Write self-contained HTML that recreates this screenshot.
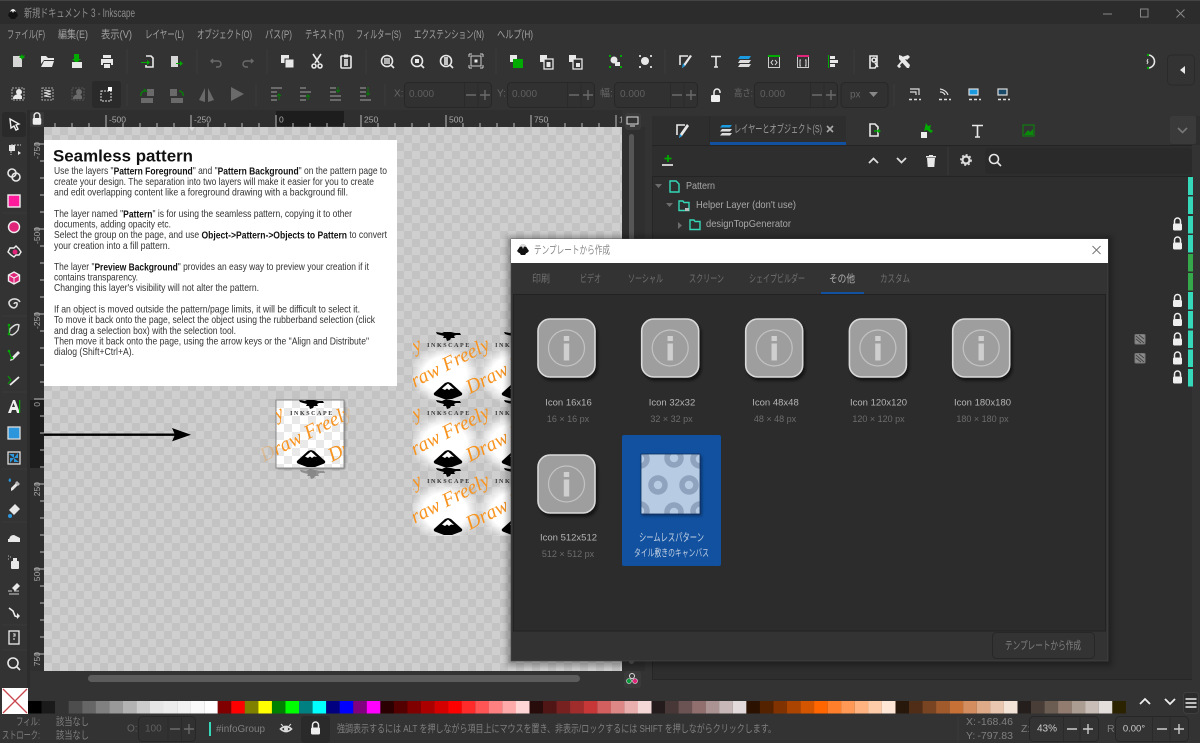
<!DOCTYPE html>
<html lang="ja"><head><meta charset="utf-8"><title>Inkscape</title>
<style>
html,body{margin:0;padding:0;background:#333;width:1200px;height:743px;overflow:hidden}
svg{display:block;filter:blur(.35px)}
text{font-family:"Liberation Sans","Noto Sans CJK JP",sans-serif;font-size:10px;fill:#a5a5a5;dominant-baseline:central}
.mn{fill:#a0a0a0;font-size:11px}
.doc{fill:#333;font-size:10.2px}
.b{font-weight:bold;fill:#111}
.tab{fill:#6f6f6f;font-size:10.5px}
.lb{fill:#b4b4b4;font-size:9.5px;text-anchor:middle}
.sb{fill:#6c6c6c;font-size:9px;text-anchor:middle}
.dim{fill:#666;font-size:10px}
.st{fill:#7f7f7f;font-size:10.5px}
.tr{fill:#a8a8a8;font-size:10.5px}
.sc{font-family:"Liberation Serif",serif;font-style:italic;font-size:20px;fill:#f7931e;dominant-baseline:auto}
.ink{font-family:"Liberation Serif",serif;font-size:6px;font-weight:bold;letter-spacing:1.6px;fill:#333;text-anchor:middle}
.i{fill:#e8e8e8}
.s{fill:none;stroke:#e8e8e8;stroke-width:1.6}
.d{fill:#6a6a6a}
.ds{fill:none;stroke:#6a6a6a;stroke-width:1.4}
.fld{fill:#313131;stroke:#272727}
</style></head><body>
<svg width="1200" height="743" viewBox="0 0 1200 743" xmlns="http://www.w3.org/2000/svg">
<defs>
<pattern id="chk" x="44" y="127" width="16" height="16" patternUnits="userSpaceOnUse"><rect width="16" height="16" fill="#cfcfcf"/><rect width="8" height="8" fill="#c3c3c3"/><rect x="8" y="8" width="8" height="8" fill="#c3c3c3"/></pattern>
<pattern id="chk2" x="276" y="400" width="16" height="16" patternUnits="userSpaceOnUse"><rect width="16" height="16" fill="#fff"/><rect width="8" height="8" fill="#e9e9e9"/><rect x="8" y="8" width="8" height="8" fill="#e9e9e9"/></pattern>
<radialGradient id="glow"><stop offset="0" stop-color="#fff"/><stop offset=".6" stop-color="#fff"/><stop offset="1" stop-color="#fff" stop-opacity="0"/></radialGradient>
<filter id="bl" x="-20%" y="-20%" width="140%" height="140%"><feGaussianBlur stdDeviation="3"/></filter>
<filter id="bl1" x="-20%" y="-20%" width="140%" height="140%"><feGaussianBlur stdDeviation="1.2"/></filter>
<clipPath id="cvs"><rect x="44" y="127" width="578" height="544"/></clipPath>
<clipPath id="pat"><rect x="413" y="332" width="137" height="204"/></clipPath>
<clipPath id="tile1"><rect x="276" y="400" width="68" height="68"/></clipPath>
<clipPath id="thumb"><rect x="641" y="454" width="59" height="60"/></clipPath>

<g id="lock"><path d="M-3-1v-2.5a3 3 0 0 1 6 0V-1" fill="none" stroke="#eee" stroke-width="1.5"/><rect x="-4.5" y="-1" width="9" height="7" rx="1.2" fill="#eee"/></g>
<g id="mount"><path d="M0-10L3-9 14 1Q15 3 12 4L4 7H-4L-12 4Q-15 3-14 1L-3-9Z" fill="#000"/><path d="M0-8.500L6-3 3-3.500 1-2-1-3.500-3-2-6-3.500Z" fill="#fff"/></g>
<g id="blot"><path d="M-12 0L-6 1-2-1 3 0 7 1 12 1 13 3 8 3 6 4 7 6 3 6 2 8-1 9-2 6-5 6-4 4-8 3-11 2Z" fill="#000"/></g>
<g id="info"><rect x="2" y="3" width="59" height="60" rx="13" fill="#000" opacity=".5" filter="url(#bl1)"/><rect x="1" y="1" width="57" height="58" rx="12" fill="#9e9e9e" stroke="#d9d9d9" stroke-width="1.6"/><circle cx="29.500" cy="30" r="18" fill="none" stroke="#c2c2c2" stroke-width="1.2"/><rect x="26.800" y="18" width="5.400" height="5" fill="#cfcfcf"/><rect x="26.800" y="25.500" width="5.400" height="17" fill="#cfcfcf"/></g>
<g id="text1"><text class="ink" x="1" y="14">INKSCAPE</text></g>
</defs>

<!-- base -->
<rect width="1200" height="743" fill="#333"/>
<rect width="1200" height="24" fill="#2c2c2c"/><rect width="1200" height="1" fill="#444"/>
<!-- titlebar -->
<g transform="translate(13,14)"><path d="M-5 1L-2-4Q0-6 2-4L5 1 4 3-4 3Z" fill="#111"/><path d="M-2-4Q0-6 2-4L3-2 1-3 0-1-1-3-3-2Z" fill="#eee"/><path d="M-4 2H4L2 5H-2Z" fill="#111"/></g>
<text x="24" y="14" style="font-size:11.500px;fill:#8d8d8d" textLength="111" lengthAdjust="spacingAndGlyphs">新規ドキュメント 3 - Inkscape</text>
<rect x="1103" y="13.500" width="9" height="1" fill="#888"/><rect x="1140.500" y="9" width="7.500" height="8" fill="none" stroke="#888"/><path d="M1176.500 9.500l8 8m0-8l-8 8" stroke="#888"/>
<!-- menu -->
<text class="mn" x="7" y="35" textLength="38" lengthAdjust="spacingAndGlyphs">ファイル(F)</text>
<text class="mn" x="58" y="35" textLength="30" lengthAdjust="spacingAndGlyphs">編集(E)</text>
<text class="mn" x="101" y="35" textLength="31" lengthAdjust="spacingAndGlyphs">表示(V)</text>
<text class="mn" x="145" y="35" textLength="39" lengthAdjust="spacingAndGlyphs">レイヤー(L)</text>
<text class="mn" x="197" y="35" textLength="55" lengthAdjust="spacingAndGlyphs">オブジェクト(O)</text>
<text class="mn" x="265" y="35" textLength="27" lengthAdjust="spacingAndGlyphs">パス(P)</text>
<text class="mn" x="305" y="35" textLength="39" lengthAdjust="spacingAndGlyphs">テキスト(T)</text>
<text class="mn" x="356" y="35" textLength="45" lengthAdjust="spacingAndGlyphs">フィルター(S)</text>
<text class="mn" x="414" y="35" textLength="70" lengthAdjust="spacingAndGlyphs">エクステンション(N)</text>
<text class="mn" x="497" y="35" textLength="36" lengthAdjust="spacingAndGlyphs">ヘルプ(H)</text>

<!-- toolbar row 1 -->
<path d="M127 49V74M197 49V74M267 49V74M366 49V74M496 49V74M665 49V74M854 49V74" stroke="#3b3b3b"/>
<g id="tb1">
<rect x="13" y="56" width="9" height="11" class="i" opacity=".9"/><path d="M22 54l-1 2-2-1 1 2-1 1 2 0 1 2 1-2 2 0-1-1 1-2-2 1z" fill="#0a0"/>
<path class="i" d="M41 56h5l2 2h6v2H44l-3 4zM44 61h10l-2 6H41z"/>
<path d="M74 54h5v5h2l-4.500 4-4.500-4h2z" fill="#0a0"/><rect x="72" y="62" width="10" height="6" class="i"/>
<path class="i" d="M103 55h8v3h-8zM101 59h12v6h-2v-2h-8v2h-2zM104 64h6v4h-6z"/>
<path class="s" d="M146 56h5l2 2v9h-7v-2"/><path d="M141 62h6v-2l3 2.500-3 2.500v-2h-6z" fill="#0a0"/>
<rect x="171" y="56" width="7" height="11" class="i" opacity=".9"/><path d="M176 63h4v-2l3 2.500-3 2.500v-2h-4z" fill="#0a0"/>
<path class="ds" d="M213 59l-2 2 2 2m-2-2h7a3 3 0 0 1 0 6h-2"/>
<path class="ds" d="M251 59l2 2-2 2m2-2h-7a3 3 0 0 0 0 6h2"/>
<rect x="281" y="55" width="8" height="8" class="i"/><rect x="285" y="59" width="9" height="9" class="i" stroke="#333"/>
<path class="s" d="M313 54l6 9M321 54l-6 9"/><circle cx="314" cy="66" r="2" class="s"/><circle cx="320" cy="66" r="2" class="s"/>
<rect x="341" y="56" width="10" height="12" rx="1" class="s"/><rect x="344" y="54.500" width="4" height="3" class="i"/><rect x="344" y="59" width="4" height="7" class="i" opacity=".8"/>
<circle cx="387" cy="61" r="5.500" class="s" stroke-width="2"/><rect x="384" y="58" width="6" height="6" class="i" opacity=".7"/><path class="s" d="M391 65l3 3"/>
<circle cx="417" cy="61" r="5.500" class="s" stroke-width="2"/><rect x="415" y="59" width="4" height="4" class="i"/><path class="s" d="M421 65l3 3"/>
<circle cx="446" cy="61" r="5.500" class="s" stroke-width="2"/><rect x="444" y="57" width="4" height="8" class="i" opacity=".8"/><path class="s" d="M450 65l3 3"/>
<rect x="471" y="56" width="10" height="10" fill="none" stroke="#ccc"/><rect x="474.500" y="59.500" width="3" height="3" class="i"/><path d="M469 54h3M469 54v3M483 54h-3M483 54v3M469 68h3M469 68v-3M483 68h-3M483 68v-3" stroke="#ccc"/>
<rect x="510" y="55" width="7" height="7" class="i"/><rect x="513" y="59" width="10" height="9" fill="#0a0"/>
<rect x="540" y="55" width="7" height="7" class="i"/><rect x="544" y="59" width="9" height="10" fill="#333" stroke="#e8e8e8" stroke-width="1.300"/><rect x="546.500" y="62" width="4" height="5" class="i"/>
<rect x="569" y="55" width="7" height="7" class="i"/><rect x="573" y="59" width="9" height="10" fill="#333" stroke="#e8e8e8" stroke-width="1.300"/><rect x="576" y="63" width="4" height="4" class="i"/>
<circle cx="614" cy="60" r="3.500" class="i"/><rect x="615" y="62" width="5" height="4" class="i"/><path d="M609 55h2v2h-2zM620 55h2v2h-2zM609 66h2v2h-2zM620 66h2v2h-2z" fill="#0a0"/>
<circle cx="645" cy="61" r="4" class="i"/><path d="M639 55h2v2h-2zM650 55h2v2h-2zM639 66h2v2h-2zM650 66h2v2h-2z" fill="#ccc"/>
<path class="s" d="M688 56h-8v9" stroke-width="1.200"/><path d="M690 55l-7 10-1 3 3-2 7-10z" class="i"/><path d="M683 63l-1 5 3-2z" fill="#1b9ae0"/>
<path d="M711 56.500h10M716 56.500V67M714 67h4" fill="none" stroke="#e8e8e8" stroke-width="1.600"/>
<path d="M740 56h11l-2 3h-11z" fill="#1b9ae0"/><path d="M740 60h11l-2 3h-11zM740 64h11l-2 3h-11z" fill="#ddd"/>
<rect x="768.500" y="55.500" width="11" height="12" fill="none" stroke="#ccc"/><rect x="768" y="55" width="12" height="2" fill="#0a0"/><path d="M773 60l-2 2.500 2 2.500M775 60l2 2.500-2 2.500" fill="none" stroke="#ddd"/>
<rect x="797.500" y="55.500" width="11" height="12" fill="none" stroke="#ccc"/><rect x="797" y="55" width="12" height="2" fill="#e0247a"/><path d="M801 60h-1v6h1M805 60h1v6h-1" fill="none" stroke="#ddd"/>
<rect x="828" y="55" width="1" height="13" fill="#0a0"/><path class="i" d="M830 56h5v3h-5zM830 60h8v3h-8zM830 64h5v3h-5z"/>
<path class="s" d="M870 56h7v9l-2 3h-5z"/><circle cx="874" cy="60" r="2" class="s"/><path class="s" d="M875 63l3 4"/>
<path class="i" d="M899 55l3 1 8 9-1 3-2 0-8-9zM908 55l2 2-3 3-1-1-6 6 1 2-2 1-2-2 6-7-1-2z"/>
<path class="s" d="M1148 55a6.500 6.500 0 1 1 0 13"/><circle cx="1148" cy="55" r="1.200" fill="#0a0"/><circle cx="1148" cy="68" r="1.200" fill="#0a0"/><path d="M1148 59l-1 2 1 1-1 2" stroke="#ddd" fill="none"/>
<rect x="1167.500" y="55" width="27" height="30" rx="4" fill="none" stroke="#2a2a2a"/><path d="M1185 66v8l-5-4z" class="i"/>
</g>
<!-- toolbar row 2 -->
<rect x="92" y="81" width="29" height="27" rx="3" fill="#2a2a2a"/>
<path d="M127 84V106M256 84V106M385 84V106M894 84V106" stroke="#3b3b3b"/>
<g>
<rect x="12" y="88" width="12" height="12" fill="none" stroke="#aaa" stroke-dasharray="2 1"/><circle cx="19" cy="92" r="3" class="i"/><path class="i" d="M13 99a5 4 0 0 1 9-3v3z"/>
<rect x="42" y="88" width="11" height="12" fill="none" stroke="#aaa" stroke-dasharray="2 1"/><path d="M44 90l7 1-7 2 7 1-7 2 7 1" fill="none" stroke="#ddd"/>
<rect x="72" y="88" width="12" height="12" fill="none" stroke="#555" stroke-dasharray="2 1"/><circle cx="79" cy="92" r="3" class="d"/><path class="d" d="M73 99a5 4 0 0 1 9-3v3z"/>
<rect x="101" y="91" width="10" height="10" fill="none" stroke="#ddd" stroke-dasharray="2 1"/><rect x="108" y="87" width="4" height="4" fill="#fff"/>
<rect x="141" y="98" width="12" height="5" class="d"/><rect x="147" y="89" width="7" height="7" class="d"/><path d="M141 96a4 4 0 0 1 4-5h1l-2-2" fill="none" stroke="#0a7a0a" stroke-width="1.500"/>
<rect x="171" y="98" width="12" height="5" class="d"/><rect x="170" y="89" width="7" height="7" class="d"/><path d="M183 96a4 4 0 0 0-4-5" fill="none" stroke="#0a7a0a" stroke-width="1.500"/>
<path class="d" d="M205 88v14l-6-2zM208 88v14l6-2z"/>
<path class="d" d="M231 87l13 7-13 7z"/>
<path class="d" d="M271 87h11v2h-11zM271 91h6v2h-6zM271 95h6v2h-6zM271 99h6v2h-6z"/><path d="M279 100v-6l2 2m-2-2l-2 2" stroke="#0a7a0a" fill="none"/>
<path class="d" d="M300 87h6v2h-6zM300 91h11v2h-11zM300 95h6v2h-6zM300 99h6v2h-6z"/><path d="M308 100v-5l2 2m-2-2l-2 2" stroke="#0a7a0a" fill="none"/>
<path class="d" d="M330 87h6v2h-6zM330 91h6v2h-6zM330 95h11v2h-11zM330 99h11v2h-11z"/><path d="M338 87v5l2-2m-2 2l-2-2" stroke="#0a7a0a" fill="none"/>
<path class="d" d="M360 87h6v2h-6zM360 91h6v2h-6zM360 95h6v2h-6zM360 99h11v2h-11z"/><path d="M368 87v8l2-2m-2 2l-2-2" stroke="#0a7a0a" fill="none"/>
</g>
<text class="dim" x="394" y="94">X:</text>
<rect class="fld" x="404.500" y="82.500" width="87" height="25" rx="4"/><path d="M464.500 83V107M478 83V107" stroke="#2a2a2a"/><text class="dim" x="409" y="94.500" style="fill:#5f5f5f">0.000</text><path class="ds" d="M466 95h10M480 95h10M485 90v10"/>
<text class="dim" x="497" y="94">Y:</text>
<rect class="fld" x="507.500" y="82.500" width="87" height="25" rx="4"/><path d="M567.500 83V107M581 83V107" stroke="#2a2a2a"/><text class="dim" x="512" y="94.500" style="fill:#5f5f5f">0.000</text><path class="ds" d="M569 95h10M583 95h10M588 90v10"/>
<text class="dim" x="600" y="94">幅:</text>
<rect class="fld" x="614.500" y="82.500" width="83" height="25" rx="4"/><path d="M670.500 83V107M684 83V107" stroke="#2a2a2a"/><text class="dim" x="620" y="94.500" style="fill:#5f5f5f">0.000</text><path class="ds" d="M672 95h10M686 95h10M691 90v10"/>
<g transform="translate(716,96)"><path d="M-2-1v-3a3 3 0 0 1 6 0v1" fill="none" stroke="#eee" stroke-width="1.500"/><rect x="-5" y="-1" width="9" height="7" rx="1" fill="#eee"/></g>
<text class="dim" x="734" y="94" textLength="19" lengthAdjust="spacingAndGlyphs">高さ:</text>
<rect class="fld" x="754.500" y="82.500" width="83" height="25" rx="4"/><path d="M810.500 83V107M824 83V107" stroke="#2a2a2a"/><text class="dim" x="760" y="94.500" style="fill:#5f5f5f">0.000</text><path class="ds" d="M812 95h10M826 95h10M831 90v10"/>
<rect class="fld" x="841" y="82.500" width="47" height="25" rx="4"/><text class="dim" x="850" y="95">px</text><path d="M869 92h9l-4.500 5z" fill="#888"/>
<g fill="none" stroke="#ddd" stroke-width="1.200">
<path d="M910 89h9v6M910 92h6v3"/><path d="M909 99.500h3M914 99.500h3M919 99.500h2" stroke-width="1.600"/>
<path d="M940 89a10 8 0 0 1 8 6M940 92a5 5 0 0 1 5 3"/><path d="M939 99.500h3M944 99.500h3M949 99.500h2" stroke-width="1.600"/>
<rect x="969" y="89" width="9" height="6" fill="#1b9ae0" stroke="#ddd"/><path d="M969 99.500h3M974 99.500h3M979 99.500h2" stroke-width="1.600"/>
<rect x="998" y="89" width="9" height="6" fill="#1a4a6a" stroke="#ddd"/><path d="M998 99.500h3M1003 99.500h3M1008 99.500h2" stroke-width="1.600"/>
</g>

<!-- left toolbar -->
<rect x="0" y="110" width="27" height="606" fill="#333"/>
<rect x="27" y="110" width="3" height="606" fill="#2c2c2c"/>
<rect x="2" y="112" width="24" height="25" rx="3" fill="#2a2a2a"/>
<g>
<path d="M10 119l9 5-3 1 2 4-2 1-2-4-3 2z" fill="#222" stroke="#eee" stroke-width="1.400"/>
<rect x="9" y="145" width="6" height="6" class="i"/><path d="M11 145h10M11 145v10" stroke="#ccc" stroke-dasharray="2 1"/><path d="M18 151l3 2-3 2z" class="i"/>
<circle cx="12" cy="173" r="4" class="s"/><circle cx="16" cy="177" r="4" class="s"/>
<rect x="8" y="195" width="12" height="12" fill="#ff1a9c" stroke="#eee" stroke-width="1.400"/>
<circle cx="14" cy="227" r="5.500" fill="#e0247a" stroke="#eee" stroke-width="1.400"/>
<path d="M8 252l2-4 4 0 2-2 3 3 2 3-2 3-3 0-2 2-3-2z" fill="none" stroke="#eee" stroke-width="1.400"/><circle cx="15" cy="252" r="2.500" fill="#e0247a"/>
<path d="M14 272l5.500 3v6l-5.500 3-5.500-3v-6z" fill="#e0247a" stroke="#eee" stroke-width="1.400"/><path d="M8.500 275l5.500 3 5.500-3M14 278v6" stroke="#eee" fill="none"/>
<path d="M14 304a2 2 0 0 1 3-1 4 4 0 0 1-3 5 5.500 5.500 0 0 1-5-6 6.500 6.500 0 0 1 11 0" fill="none" stroke="#ddd" stroke-width="1.600"/>
<path d="M10 329q6-6 9-4l-1 5q-3 4-6 5l-3-1z" fill="none" stroke="#ddd" stroke-width="1.400"/><circle cx="9" cy="325" r="1.300" fill="#0a0"/><circle cx="9" cy="334" r="1.300" fill="#0a0"/><path d="M9 325v9" stroke="#0a0"/>
<path d="M11 358l7-7 2 2-7 7-3 1z" class="i"/><circle cx="9" cy="351" r="1.300" fill="#0a0"/><circle cx="12" cy="358" r="1.300" fill="#0a0"/><path d="M9 351l2 6" stroke="#0a0"/>
<path d="M10 385l9-8" stroke="#eee" stroke-width="1.800"/><path d="M8 376l3 4-3 4" stroke="#0a0" fill="none"/>
<path d="M8 413l5-13h2l5 13h-3l-1-3h-4l-1 3zM12 407h3l-1.500-4z" fill="#eee" fill-rule="evenodd"/><rect x="19" y="400" width="1.200" height="13" fill="#0a0"/>
<rect x="8" y="427" width="12" height="12" stroke="#ddd" stroke-width="1.300" fill="#2b96dc"/>
<rect x="8" y="452" width="12" height="12" stroke="#ddd" stroke-width="1.300" fill="#333"/><path d="M14 458l-5-4 5 0zM14 458l4-5v5zM14 458l5 4h-5zM14 458l-4 5v-5z" fill="#2b96dc"/>
<path d="M11 488l6-6 2 2-6 6-2 1z" class="i"/><path d="M15 483l2-2 3 3-2 2z" fill="#bbb"/><path d="M10 478q-3 3 0 4 2-1 0-4z" fill="#2b96dc"/>
<path d="M9 510l6-6 5 5-6 6z" class="i"/><circle cx="10" cy="516" r="2" fill="#2b96dc"/>
<path d="M9 541q0-6 5-6l6 3v3z" class="i"/><rect x="8" y="539" width="12" height="3" class="i"/>
<rect x="11" y="561" width="8" height="8" rx="1" class="i"/><rect x="13" y="558" width="4" height="3" class="i"/><path d="M8 556h2M8 559h2M10 557h1" stroke="#bbb" stroke-dasharray="1 1"/>
<path d="M12 588l5-5 3 3-5 5z" class="i"/><path d="M8 591h4M14 591h5" stroke="#ccc"/><path d="M9 594h10" stroke="#ccc"/>
<path d="M9 608l4 3 2 5 3 1" fill="none" stroke="#eee" stroke-width="1.600"/><path d="M17 613l3 3-3 3z" class="i"/>
<rect x="9" y="631" width="10" height="13" fill="none" stroke="#eee" stroke-width="1.300"/><path d="M13 634l2 0 0 2-2 0M13 639h2" stroke="#eee"/>
<circle cx="13" cy="663" r="5" class="s"/><path class="s" d="M17 667l3 3"/>
</g>
<path d="M2 213H27M2 316H27M2 392H27M2 469H27M2 522H27M2 625H27M2 650H27" stroke="#3a3a3a"/>

<!-- canvas -->
<rect x="44" y="127" width="578" height="544" fill="url(#chk)"/>
<g clip-path="url(#cvs)">
<!-- infopanel -->
<rect x="44" y="140" width="353" height="246" fill="#fff"/>
<text x="53" y="156" style="font-size:17px;font-weight:bold;fill:#111" textLength="140" lengthAdjust="spacingAndGlyphs">Seamless pattern</text>
<text class="doc" x="54" y="171.700" textLength="333" lengthAdjust="spacingAndGlyphs">Use the layers "<tspan class="b">Pattern Foreground</tspan>" and "<tspan class="b">Pattern Background</tspan>" on the pattern page to</text>
<text class="doc" x="54" y="182.300" textLength="320" lengthAdjust="spacingAndGlyphs">create your design. The separation into two layers will make it easier for you to create</text>
<text class="doc" x="54" y="193" textLength="294" lengthAdjust="spacingAndGlyphs">and edit overlapping content like a foreground drawing with a background fill.</text>
<text class="doc" x="54" y="214.300" textLength="298" lengthAdjust="spacingAndGlyphs">The layer named "<tspan class="b">Pattern</tspan>" is for using the seamless pattern, copying it to other</text>
<text class="doc" x="54" y="225" textLength="117" lengthAdjust="spacingAndGlyphs">documents, adding opacity etc.</text>
<text class="doc" x="54" y="235.700" textLength="333" lengthAdjust="spacingAndGlyphs">Select the group on the page, and use <tspan class="b">Object-&gt;Pattern-&gt;Objects to Pattern</tspan> to convert</text>
<text class="doc" x="54" y="246.300" textLength="116" lengthAdjust="spacingAndGlyphs">your creation into a fill pattern.</text>
<text class="doc" x="54" y="267.700" textLength="315" lengthAdjust="spacingAndGlyphs">The layer "<tspan class="b">Preview Background</tspan>" provides an easy way to preview your creation if it</text>
<text class="doc" x="54" y="278" textLength="84" lengthAdjust="spacingAndGlyphs">contains transparency.</text>
<text class="doc" x="54" y="288.700" textLength="205" lengthAdjust="spacingAndGlyphs">Changing this layer's visibility will not alter the pattern.</text>
<text class="doc" x="54" y="310" textLength="306" lengthAdjust="spacingAndGlyphs">If an object is moved outside the pattern/page limits, it will be difficult to select it.</text>
<text class="doc" x="54" y="320.700" textLength="321" lengthAdjust="spacingAndGlyphs">To move it back onto the page, select the object using the rubberband selection (click</text>
<text class="doc" x="54" y="331.300" textLength="182" lengthAdjust="spacingAndGlyphs">and drag a selection box) with the selection tool.</text>
<text class="doc" x="54" y="342" textLength="315" lengthAdjust="spacingAndGlyphs">Then move it back onto the page, using the arrow keys or the "Align and Distribute"</text>
<text class="doc" x="54" y="352.700" textLength="80" lengthAdjust="spacingAndGlyphs">dialog (Shift+Ctrl+A).</text>
<!-- arrow -->
<path d="M44 434.700H178" stroke="#000" stroke-width="2.400"/><path d="M172 428l19 6.700-19 6.700 3-6.700z" fill="#000"/>
<!-- single tile -->
<rect x="277" y="401" width="68" height="68" fill="#000" opacity=".45" filter="url(#bl1)"/>
<g transform="translate(312,470)" opacity=".3"><use href="#blot"/></g>
<g style="opacity:.3"><text class="sc" transform="translate(264,462) rotate(-27)" textLength="100" lengthAdjust="spacingAndGlyphs">Draw Freely</text></g>
<rect x="276" y="400" width="68" height="68" fill="url(#chk2)" stroke="#8a8a8a"/>
<g clip-path="url(#tile1)">
<g transform="translate(311,400)"><use href="#blot"/><use href="#text1"/></g>
<use href="#mount" transform="translate(311,460)"/>
<text class="sc" transform="translate(196,462) rotate(-27)" textLength="100" lengthAdjust="spacingAndGlyphs">Draw Freely</text>
<text class="sc" transform="translate(264,462) rotate(-27)" textLength="100" lengthAdjust="spacingAndGlyphs">Draw Freely</text>
<text class="sc" transform="translate(332,462) rotate(-27)" textLength="100" lengthAdjust="spacingAndGlyphs">Draw Freely</text>
</g>
<!-- pattern repeat -->
<g clip-path="url(#pat)">
<ellipse cx="445" cy="375" rx="36" ry="30" fill="url(#glow)"/><ellipse cx="445" cy="443" rx="36" ry="30" fill="url(#glow)"/><ellipse cx="445" cy="511" rx="36" ry="30" fill="url(#glow)"/>
<ellipse cx="513" cy="375" rx="36" ry="30" fill="url(#glow)"/><ellipse cx="513" cy="443" rx="36" ry="30" fill="url(#glow)"/><ellipse cx="513" cy="511" rx="36" ry="30" fill="url(#glow)"/>
<g transform="translate(448,332)"><use href="#blot"/><use href="#text1"/></g>
<g transform="translate(448,400)"><use href="#blot"/><use href="#text1"/></g>
<g transform="translate(448,468)"><use href="#blot"/><use href="#text1"/></g>
<g transform="translate(516,332)"><use href="#blot"/><use href="#text1"/></g>
<g transform="translate(516,400)"><use href="#blot"/><use href="#text1"/></g>
<g transform="translate(516,468)"><use href="#blot"/><use href="#text1"/></g>
<use href="#mount" transform="translate(448,392)"/><use href="#mount" transform="translate(448,460)"/><use href="#mount" transform="translate(448,528)"/>
<use href="#mount" transform="translate(516,392)"/><use href="#mount" transform="translate(516,460)"/><use href="#mount" transform="translate(516,528)"/>
<text class="sc" transform="translate(334,394) rotate(-27)" textLength="100" lengthAdjust="spacingAndGlyphs">Draw Freely</text>
<text class="sc" transform="translate(402,394) rotate(-27)" textLength="100" lengthAdjust="spacingAndGlyphs">Draw Freely</text>
<text class="sc" transform="translate(470,394) rotate(-27)" textLength="100" lengthAdjust="spacingAndGlyphs">Draw Freely</text>
<text class="sc" transform="translate(334,462) rotate(-27)" textLength="100" lengthAdjust="spacingAndGlyphs">Draw Freely</text>
<text class="sc" transform="translate(402,462) rotate(-27)" textLength="100" lengthAdjust="spacingAndGlyphs">Draw Freely</text>
<text class="sc" transform="translate(470,462) rotate(-27)" textLength="100" lengthAdjust="spacingAndGlyphs">Draw Freely</text>
<text class="sc" transform="translate(334,530) rotate(-27)" textLength="100" lengthAdjust="spacingAndGlyphs">Draw Freely</text>
<text class="sc" transform="translate(402,530) rotate(-27)" textLength="100" lengthAdjust="spacingAndGlyphs">Draw Freely</text>
<text class="sc" transform="translate(470,530) rotate(-27)" textLength="100" lengthAdjust="spacingAndGlyphs">Draw Freely</text>
</g>
</g>

<!-- rulers -->
<rect x="30" y="110" width="592" height="17" fill="#2f2f2f"/>
<rect x="276" y="111" width="68" height="15" fill="#1d1d1d"/>
<rect x="30" y="127" width="14" height="544" fill="#2f2f2f"/>
<rect x="30" y="400" width="14" height="68" fill="#1d1d1d"/>
<rect x="30" y="112" width="14" height="15" rx="2" fill="#3a3a3a"/>
<g transform="translate(37,119) scale(.95)"><use href="#lock"/></g>
<g stroke="#bbb" fill="none">
<path d="M106 115V127M191 115V127M276 115V127M361 115V127M446 115V127M531 115V127M616 115V127"/>
<path d="M55 123V127M72 123V127M89 123V127M123 123V127M140 123V127M157 123V127M174 123V127M208 123V127M225 123V127M242 123V127M259 123V127M293 123V127M310 123V127M327 123V127M344 123V127M378 123V127M395 123V127M412 123V127M429 123V127M463 123V127M480 123V127M497 123V127M514 123V127M548 123V127M565 123V127M582 123V127M599 123V127"/>
<path d="M34 144H44M34 229H44M34 314H44M34 399H44M34 484H44M34 569H44M34 654H44"/>
<path d="M40 161H44M40 178H44M40 195H44M40 212H44M40 246H44M40 263H44M40 280H44M40 297H44M40 331H44M40 348H44M40 365H44M40 382H44M40 416H44M40 433H44M40 450H44M40 467H44M40 501H44M40 518H44M40 535H44M40 552H44M40 586H44M40 603H44M40 620H44M40 637H44"/>
</g>
<path d="M189 127l6 0-3 4z" fill="#ddd"/>
<g>
<text x="109" y="119.500" style="font-size:8.500px;fill:#aaa">-500</text><text x="194" y="119.500" style="font-size:8.500px;fill:#aaa">-250</text><text x="279" y="119.500" style="font-size:8.500px;fill:#aaa">0</text><text x="364" y="119.500" style="font-size:8.500px;fill:#aaa">250</text><text x="449" y="119.500" style="font-size:8.500px;fill:#aaa">500</text><text x="534" y="119.500" style="font-size:8.500px;fill:#aaa">750</text><text x="619" y="119.500" style="font-size:8.500px;fill:#aaa">1</text>
<text transform="translate(37,142) rotate(-90)" style="font-size:8.500px;fill:#aaa;text-anchor:end">-750</text>
<text transform="translate(37,227) rotate(-90)" style="font-size:8.500px;fill:#aaa;text-anchor:end">-500</text>
<text transform="translate(37,312) rotate(-90)" style="font-size:8.500px;fill:#aaa;text-anchor:end">-250</text>
<text transform="translate(37,402) rotate(-90)" style="font-size:8.500px;fill:#aaa;text-anchor:end">0</text>
<text transform="translate(37,482) rotate(-90)" style="font-size:8.500px;fill:#aaa;text-anchor:end">250</text>
<text transform="translate(37,567) rotate(-90)" style="font-size:8.500px;fill:#aaa;text-anchor:end">500</text>
<text transform="translate(37,652) rotate(-90)" style="font-size:8.500px;fill:#aaa;text-anchor:end">750</text>
</g>

<!-- canvas scrollbars -->
<rect x="622" y="110" width="28" height="570" fill="#333"/>
<rect x="622" y="127" width="23" height="544" fill="#2f2f2f"/>
<rect x="625" y="113" width="16" height="17" rx="3" fill="#3a3a3a"/>
<rect x="627" y="117" width="11" height="7" fill="#333" stroke="#ddd"/><path d="M630 126h5" stroke="#ddd"/>
<rect x="629" y="134" width="5" height="530" rx="2.500" fill="#565656"/>
<rect x="44" y="671" width="601" height="17" fill="#333"/>
<rect x="88" y="675" width="492" height="7" rx="3.500" fill="#5c5c5c"/>
<rect x="624" y="671" width="17" height="17" rx="3" fill="#3a3a3a"/>
<circle cx="632" cy="676" r="2.500" fill="none" stroke="#ddd"/><circle cx="629" cy="681" r="2.500" fill="#0a9a3a" stroke="#ddd" stroke-width=".6"/><circle cx="635" cy="681" r="2.500" fill="#e0247a" stroke="#ddd" stroke-width=".6"/>

<!-- right panel -->
<rect x="645" y="110" width="555" height="606" fill="#333"/>
<rect x="652" y="116" width="548" height="29" fill="#2e2e2e"/>
<rect x="652" y="146" width="540" height="30" fill="#2e2e2e"/>
<rect x="652" y="177" width="540" height="502" fill="#2e2e2e"/>
<path d="M652.500 177V679.500H1192" fill="none" stroke="#262626"/>
<path d="M652 145.500H1192M652 176.500H1192M710 116V142" stroke="#242424"/>
<rect x="710" y="116" width="136" height="29" fill="#2e2e2e"/>
<rect x="710" y="142" width="136" height="3" fill="#11519f"/>
<rect x="846" y="116" width="324" height="29" fill="#333"/>
<rect x="1170" y="116" width="26" height="28" fill="#3a3a3a" rx="2"/>
<path d="M1178 128l4.500 4.500 4.500-4.500" fill="none" stroke="#777" stroke-width="1.600"/>
<path class="s" d="M685 125h-8v10" stroke-width="1.300"/><path d="M687 124l-7 10-1 4 3-2 7-10z" class="i"/><path d="M680 134l-1 4 3-2z" fill="#1b9ae0"/>
<path d="M722 125h10l-2 2.500h-10z" fill="#1b9ae0"/><path d="M722 129h10l-2 2.500h-10zM722 133h10l-2 2.500h-10z" fill="#ddd"/>
<text x="734" y="129.500" style="fill:#999;font-size:11px" textLength="88" lengthAdjust="spacingAndGlyphs">レイヤーとオブジェクト(S)</text>
<path d="M827 126l6 6m0-6l-6 6" stroke="#aaa" stroke-width="1.600"/>
<path class="s" d="M870 124h5l3 3v9h-8z"/><path d="M874 131h5" stroke="#0a0" stroke-width="1.500"/><path d="M878 129l3 2-3 2z" fill="#0a0"/>
<rect x="921" y="132" width="6" height="6" fill="#eee"/><path d="M926 123l2 3 3-1-1 4 3 2-2 2-4-3-3 1z" fill="#0a0"/>
<path d="M972 125.500h11M977.500 125.500V137M975 137h5" fill="none" stroke="#e8e8e8" stroke-width="1.600"/>
<rect x="1023" y="125" width="11" height="11" fill="none" stroke="#0a8a0a"/><path d="M1024 135l4-5 2 2 3-3v6z" fill="#0a8a0a"/>
<path d="M662 165h11" stroke="#eee" stroke-width="1.600"/><path d="M668 155v7m-3.500-3.500h7" stroke="#0a0" stroke-width="1.800"/>
<path d="M869 163l4.500-4.500 4.500 4.500M897 158l4.500 4.500 4.500-4.500" fill="none" stroke="#ddd" stroke-width="1.800"/>
<path class="i" d="M926 156h10v1.500h-10zM929 155h4v1h-4zM927 158h8l-.7 9h-6.600z"/>
<circle cx="966" cy="160" r="3.500" fill="none" stroke="#ddd" stroke-width="2.200"/><circle cx="966" cy="160" r="5.200" fill="none" stroke="#ddd" stroke-width="1.400" stroke-dasharray="2 2"/>
<path d="M948 147V175" stroke="#3a3a3a"/>
<rect x="985" y="148" width="207" height="26" rx="3" fill="#2a2a2a"/>
<circle cx="994" cy="159" r="4.500" class="s"/><path class="s" d="M997.500 162.500l3.500 3.500"/>
<!-- tree -->
<path d="M655 184h7l-3.500 4zM666 203h7l-3.500 4z" fill="#6c6c6c"/><path d="M678 222v7l4-3.500z" fill="#6c6c6c"/>
<path d="M670 181h6l3 3v8h-9z" fill="none" stroke="#35d8b8" stroke-width="1.400"/>
<text class="tr" x="686" y="186" textLength="29" lengthAdjust="spacingAndGlyphs">Pattern</text>
<path d="M679 201h4l1 1.500h5v8h-10z" fill="none" stroke="#35d8b8" stroke-width="1.400"/><rect x="685" y="208" width="4" height="3" fill="#bbb"/>
<text class="tr" x="696" y="205" textLength="100" lengthAdjust="spacingAndGlyphs">Helper Layer (don't use)</text>
<path d="M690 220h4l1 1.500h5v8h-10z" fill="none" stroke="#35d8b8" stroke-width="1.400"/>
<text class="tr" x="706" y="224" textLength="85" lengthAdjust="spacingAndGlyphs">designTopGenerator</text>
<g fill="#35d8b8">
<rect x="1188" y="177" width="5" height="18"/><rect x="1188" y="196.500" width="5" height="17.500"/><rect x="1188" y="216" width="5" height="17.500"/><rect x="1188" y="235" width="5" height="17.500"/>
<rect x="1188" y="254" width="5" height="17.500" fill="#34a84a"/><rect x="1188" y="273" width="5" height="17.500" fill="#34a84a"/>
<rect x="1188" y="292" width="5" height="17.500"/><rect x="1188" y="311" width="5" height="17.500"/><rect x="1188" y="330.500" width="5" height="17.500"/><rect x="1188" y="349.500" width="5" height="17.500"/><rect x="1188" y="369" width="5" height="17.500"/>
</g>
<use href="#lock" transform="translate(1177.500,224.500)"/><use href="#lock" transform="translate(1177.500,243.500)"/><use href="#lock" transform="translate(1177.500,301)"/><use href="#lock" transform="translate(1177.500,320)"/><use href="#lock" transform="translate(1177.500,339.500)"/><use href="#lock" transform="translate(1177.500,358.500)"/><use href="#lock" transform="translate(1177.500,377.500)"/>
<rect x="1135" y="334.500" width="10" height="9.500" rx="1" fill="#8a8a8a" stroke="#777"/><path d="M1136 336l8 7M1136 339l5 4M1139 335l5 4" stroke="#444"/>
<rect x="1135" y="353.500" width="10" height="9.500" rx="1" fill="#8a8a8a" stroke="#777"/><path d="M1136 355l8 7M1136 358l5 4M1139 354l5 4" stroke="#444"/>

<!-- palette -->
<rect x="0" y="688" width="1200" height="28" fill="#333"/>
<rect x="2" y="688" width="26" height="26" fill="#fff"/><path d="M3 689l24 24m0-24l-24 24" stroke="#c8474f" stroke-width="1.300"/>
<g>
<rect x="28.000" y="701" width="13.600" height="12.500" fill="#000000"/><rect x="41.500" y="701" width="13.600" height="12.500" fill="#1a1a1a"/><rect x="55.100" y="701" width="13.600" height="12.500" fill="#333333"/><rect x="68.600" y="701" width="13.600" height="12.500" fill="#4d4d4d"/><rect x="82.200" y="701" width="13.600" height="12.500" fill="#666666"/><rect x="95.700" y="701" width="13.600" height="12.500" fill="#808080"/><rect x="109.300" y="701" width="13.600" height="12.500" fill="#999999"/><rect x="122.800" y="701" width="13.600" height="12.500" fill="#b3b3b3"/><rect x="136.400" y="701" width="13.600" height="12.500" fill="#cccccc"/><rect x="150.000" y="701" width="13.600" height="12.500" fill="#e6e6e6"/><rect x="163.500" y="701" width="13.600" height="12.500" fill="#ececec"/><rect x="177.100" y="701" width="13.600" height="12.500" fill="#f2f2f2"/><rect x="190.600" y="701" width="13.600" height="12.500" fill="#f9f9f9"/><rect x="204.200" y="701" width="13.600" height="12.500" fill="#ffffff"/>
<rect x="217.700" y="701" width="13.600" height="12.500" fill="#800000"/><rect x="231.300" y="701" width="13.600" height="12.500" fill="#ff0000"/><rect x="244.800" y="701" width="13.600" height="12.500" fill="#808000"/><rect x="258.400" y="701" width="13.600" height="12.500" fill="#ffff00"/><rect x="271.900" y="701" width="13.600" height="12.500" fill="#008000"/><rect x="285.500" y="701" width="13.600" height="12.500" fill="#00ff00"/><rect x="299.100" y="701" width="13.600" height="12.500" fill="#008080"/><rect x="312.600" y="701" width="13.600" height="12.500" fill="#00ffff"/><rect x="326.200" y="701" width="13.600" height="12.500" fill="#000080"/><rect x="339.700" y="701" width="13.600" height="12.500" fill="#0000ff"/><rect x="353.300" y="701" width="13.600" height="12.500" fill="#800080"/><rect x="366.800" y="701" width="13.600" height="12.500" fill="#ff00ff"/>
<rect x="380.400" y="701" width="13.600" height="12.500" fill="#2b0000"/><rect x="393.900" y="701" width="13.600" height="12.500" fill="#550000"/><rect x="407.500" y="701" width="13.600" height="12.500" fill="#800000"/><rect x="421.000" y="701" width="13.600" height="12.500" fill="#aa0000"/><rect x="434.600" y="701" width="13.600" height="12.500" fill="#d40000"/><rect x="448.200" y="701" width="13.600" height="12.500" fill="#ff0000"/><rect x="461.700" y="701" width="13.600" height="12.500" fill="#ff2a2a"/><rect x="475.300" y="701" width="13.600" height="12.500" fill="#ff5555"/><rect x="488.800" y="701" width="13.600" height="12.500" fill="#ff8080"/><rect x="502.400" y="701" width="13.600" height="12.500" fill="#ffaaaa"/><rect x="515.900" y="701" width="13.600" height="12.500" fill="#ffd5d5"/>
<rect x="529.500" y="701" width="13.600" height="12.500" fill="#280b0b"/><rect x="543.000" y="701" width="13.600" height="12.500" fill="#501616"/><rect x="556.600" y="701" width="13.600" height="12.500" fill="#782121"/><rect x="570.100" y="701" width="13.600" height="12.500" fill="#a02c2c"/><rect x="583.700" y="701" width="13.600" height="12.500" fill="#c83737"/><rect x="597.300" y="701" width="13.600" height="12.500" fill="#d35f5f"/><rect x="610.800" y="701" width="13.600" height="12.500" fill="#de8787"/><rect x="624.400" y="701" width="13.600" height="12.500" fill="#e9afaf"/><rect x="637.900" y="701" width="13.600" height="12.500" fill="#f4d7d7"/>
<rect x="651.500" y="701" width="13.600" height="12.500" fill="#241c1c"/><rect x="665.000" y="701" width="13.600" height="12.500" fill="#483737"/><rect x="678.600" y="701" width="13.600" height="12.500" fill="#6c5353"/><rect x="692.100" y="701" width="13.600" height="12.500" fill="#916f6f"/><rect x="705.700" y="701" width="13.600" height="12.500" fill="#ac9393"/><rect x="719.200" y="701" width="13.600" height="12.500" fill="#c8b7b7"/><rect x="732.800" y="701" width="13.600" height="12.500" fill="#e3dbdb"/>
<rect x="746.400" y="701" width="13.600" height="12.500" fill="#2b1100"/><rect x="759.900" y="701" width="13.600" height="12.500" fill="#552200"/><rect x="773.500" y="701" width="13.600" height="12.500" fill="#803300"/><rect x="787.000" y="701" width="13.600" height="12.500" fill="#aa4400"/><rect x="800.600" y="701" width="13.600" height="12.500" fill="#d45500"/><rect x="814.100" y="701" width="13.600" height="12.500" fill="#ff6600"/><rect x="827.700" y="701" width="13.600" height="12.500" fill="#ff7f2a"/><rect x="841.200" y="701" width="13.600" height="12.500" fill="#ff9955"/><rect x="854.800" y="701" width="13.600" height="12.500" fill="#ffb380"/><rect x="868.300" y="701" width="13.600" height="12.500" fill="#ffccaa"/><rect x="881.900" y="701" width="13.600" height="12.500" fill="#ffe6d5"/>
<rect x="895.500" y="701" width="13.600" height="12.500" fill="#28170b"/><rect x="909.000" y="701" width="13.600" height="12.500" fill="#502d16"/><rect x="922.600" y="701" width="13.600" height="12.500" fill="#784421"/><rect x="936.100" y="701" width="13.600" height="12.500" fill="#a05a2c"/><rect x="949.700" y="701" width="13.600" height="12.500" fill="#c87137"/><rect x="963.200" y="701" width="13.600" height="12.500" fill="#d38d5f"/><rect x="976.800" y="701" width="13.600" height="12.500" fill="#deaa87"/><rect x="990.300" y="701" width="13.600" height="12.500" fill="#e9c6af"/><rect x="1003.900" y="701" width="13.600" height="12.500" fill="#f4e3d7"/>
<rect x="1017.500" y="701" width="13.600" height="12.500" fill="#241f1c"/><rect x="1031.000" y="701" width="13.600" height="12.500" fill="#483e37"/><rect x="1044.600" y="701" width="13.600" height="12.500" fill="#6c5d53"/><rect x="1058.100" y="701" width="13.600" height="12.500" fill="#917c6f"/><rect x="1071.700" y="701" width="13.600" height="12.500" fill="#ac9d93"/><rect x="1085.200" y="701" width="13.600" height="12.500" fill="#c8beb7"/><rect x="1098.800" y="701" width="13.600" height="12.500" fill="#e3dedb"/><rect x="1112.300" y="701" width="13.600" height="12.500" fill="#2b2200"/>
</g>
<path d="M1140 704l5-5 5 5M1165 699l5 5 5-5" fill="none" stroke="#eee" stroke-width="1.800"/>
<rect x="1183.500" y="692.500" width="15" height="21" rx="3" fill="#2c2c2c" stroke="#3e3e3e"/>
<path d="M1185.500 699h11M1185.500 703h11M1185.500 707h11" stroke="#eee" stroke-width="1.500"/>

<!-- status -->
<rect x="0" y="714" width="1200" height="29" fill="#333"/>
<text class="st" x="16" y="722" textLength="24" lengthAdjust="spacingAndGlyphs">フィル:</text>
<text class="st" x="2" y="735.500" textLength="38" lengthAdjust="spacingAndGlyphs">ストローク:</text>
<text class="st" x="56" y="722" textLength="33" lengthAdjust="spacingAndGlyphs">該当なし</text>
<text class="st" x="56" y="735.500" textLength="33" lengthAdjust="spacingAndGlyphs">該当なし</text>
<text class="dim" x="127" y="729">O:</text>
<rect class="fld" x="138.500" y="716.500" width="57" height="25" rx="4"/><path d="M168 717V741M181.500 717V741" stroke="#2a2a2a"/><text class="dim" x="145" y="729" style="fill:#5f5f5f">100</text><path class="ds" d="M170 729h10M184 729h10M189 724v10"/>
<rect x="209" y="722" width="2" height="14" fill="#35d8b8"/>
<text class="st" x="216" y="729" textLength="49" lengthAdjust="spacingAndGlyphs">#infoGroup</text>
<path d="M280.500 729q5.500-5 11 0q-5.500 5-11 0z" fill="none" stroke="#ddd" stroke-width="1.600"/><circle cx="286" cy="729" r="2" fill="#ddd"/><path d="M281 724l2 2M291 724l-2 2" stroke="#ddd"/>
<rect x="301" y="716" width="29" height="27" rx="3" fill="#2a2a2a"/><use href="#lock" transform="translate(315.500,728.500)"/>
<text class="st" x="337" y="729" textLength="439" lengthAdjust="spacingAndGlyphs">強調表示するには ALT を押しながら項目上にマウスを置き、非表示/ロックするには SHIFT を押しながらクリックします。</text>
<path d="M958 716V743" stroke="#3a3a3a"/>
<text class="st" x="966" y="722">X:</text><text class="st" x="966" y="736">Y:</text>
<text class="st" x="1013" y="722" style="text-anchor:end">-168.46</text><text class="st" x="1013" y="736" style="text-anchor:end">-797.83</text>
<text class="st" x="1021" y="729">Z:</text>
<rect x="1029.500" y="716.500" width="69" height="25" rx="4" fill="#333" stroke="#272727"/><path d="M1063.500 717V741M1080 717V741" stroke="#2a2a2a"/>
<text x="1047" y="729" style="font-size:10px;fill:#ccc;text-anchor:middle">43%</text><path d="M1067 729h10M1083 729h10M1088 724v10" stroke="#ccc" stroke-width="1.400" fill="none"/>
<text class="st" x="1107" y="729">R:</text>
<rect x="1115.500" y="716.500" width="73" height="25" rx="4" fill="#333" stroke="#272727"/><path d="M1152.500 717V741M1170 717V741" stroke="#2a2a2a"/>
<text x="1134" y="729" style="font-size:9.500px;fill:#ccc;text-anchor:middle">0.00°</text><path d="M1157 729h10M1174 729h10M1179 724v10" stroke="#ccc" stroke-width="1.400" fill="none"/>

<!-- dialog -->
<rect x="507" y="236" width="605" height="430" fill="#000" opacity=".3" filter="url(#bl)"/>
<rect x="511" y="239" width="597" height="422" fill="#333" stroke="#4a4a4a" stroke-width=".6"/>
<rect x="511" y="239" width="597" height="24" fill="#fff"/>
<g transform="translate(523,250)"><path d="M-6 1L-2-5Q0-6.500 2-5L6 1 4 3-4 3Z" fill="#111"/><path d="M-2-5Q0-6.500 2-5L3-3 1-3.500 0-1-1-3.500-3-3Z" fill="#ddd"/><path d="M-4 2H4L2 5H-2Z" fill="#111"/></g>
<text x="534" y="250.500" style="font-size:11px;fill:#888" textLength="76" lengthAdjust="spacingAndGlyphs">テンプレートから作成</text>
<path d="M1092.500 246l8 8m0-8l-8 8" stroke="#777"/>
<text class="tab" x="532" y="279" textLength="18" lengthAdjust="spacingAndGlyphs">印刷</text>
<text class="tab" x="580" y="279" textLength="21" lengthAdjust="spacingAndGlyphs">ビデオ</text>
<text class="tab" x="628" y="279" textLength="35" lengthAdjust="spacingAndGlyphs">ソーシャル</text>
<text class="tab" x="689" y="279" textLength="35" lengthAdjust="spacingAndGlyphs">スクリーン</text>
<text class="tab" x="749" y="279" textLength="56" lengthAdjust="spacingAndGlyphs">シェイプビルダー</text>
<text x="829" y="279" style="font-size:10.500px;fill:#b0b0b0" textLength="26" lengthAdjust="spacingAndGlyphs">その他</text>
<text class="tab" x="880" y="279" textLength="30" lengthAdjust="spacingAndGlyphs">カスタム</text>
<rect x="821" y="292" width="43" height="2" fill="#11519f"/>
<rect x="513.500" y="294.500" width="592" height="336.500" fill="#2c2c2c" stroke="#222"/>

<use href="#info" x="537" y="318"/><use href="#info" x="640.700" y="318"/><use href="#info" x="744.700" y="318"/><use href="#info" x="848.400" y="318"/><use href="#info" x="951.700" y="318"/>
<text class="lb" x="568.500" y="403">Icon 16x16</text><text class="sb" x="568" y="419">16 × 16 px</text>
<text class="lb" x="672" y="403">Icon 32x32</text><text class="sb" x="671.500" y="419">32 × 32 px</text>
<text class="lb" x="775.500" y="403">Icon 48x48</text><text class="sb" x="775" y="419">48 × 48 px</text>
<text class="lb" x="878.500" y="403">Icon 120x120</text><text class="sb" x="878.500" y="419">120 × 120 px</text>
<text class="lb" x="982.500" y="403">Icon 180x180</text><text class="sb" x="982.500" y="419">180 × 180 px</text>
<use href="#info" x="537" y="454"/>
<text class="lb" x="568.500" y="538">Icon 512x512</text><text class="sb" x="568" y="554">512 × 512 px</text>

<rect x="622" y="435" width="99" height="131" rx="2" fill="#11519f"/>
<rect x="642" y="456" width="60" height="60" fill="#0b2f5e" opacity=".8" filter="url(#bl1)"/>
<rect x="641" y="454" width="59" height="60" fill="#b7cbe3"/>
<g clip-path="url(#thumb)" fill="none" stroke="#8fa3bf" stroke-width="5.500">
<circle cx="640" cy="459" r="7"/><circle cx="674" cy="458" r="7"/><circle cx="700" cy="459" r="7"/>
<circle cx="658" cy="485" r="7"/><circle cx="689" cy="485" r="7"/>
<circle cx="640" cy="511" r="7"/><circle cx="674" cy="512" r="7"/><circle cx="700" cy="511" r="7"/>
</g>
<rect x="641" y="454" width="59" height="60" fill="none" stroke="#0b2f5e" stroke-width=".8"/>
<text x="639" y="538" style="font-size:11px;fill:#c3d0e2" textLength="65" lengthAdjust="spacingAndGlyphs">シームレスパターン</text>
<text x="634" y="554" style="font-size:10px;fill:#c3d0e2" textLength="75" lengthAdjust="spacingAndGlyphs">タイル敷きのキャンバス</text>

<rect x="992.500" y="632.500" width="102" height="26" rx="4" fill="#333" stroke="#272727"/>
<text x="1005" y="646" style="font-size:11px;fill:#808080" textLength="76" lengthAdjust="spacingAndGlyphs">テンプレートから作成</text>
</svg>
</body></html>
